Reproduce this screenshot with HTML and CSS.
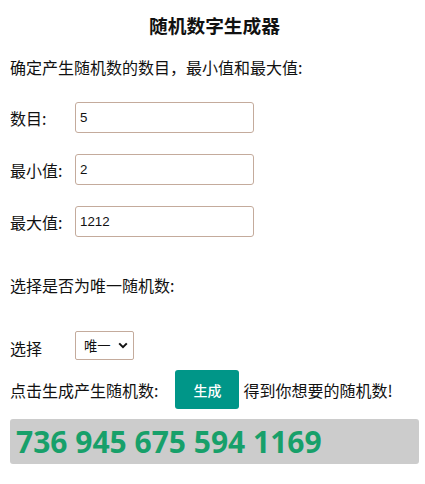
FILE: index.html
```html
<!DOCTYPE html>
<html lang="zh-CN">
<head>
<meta charset="utf-8">
<meta name="viewport" content="width=device-width, initial-scale=1">
<title>随机数字生成器</title>
<link rel="stylesheet" href="styles.css">
</head>
<body>
<div class="wrap">
  <h3 class="rng-title">随机数字生成器</h3>
  <p class="rng-intro">确定产生随机数的数目，最小值和最大值:</p>

  <div class="rng-row">
    <label class="rng-label" for="count">数目:</label>
    <input class="rng-input" id="count" type="text" value="5">
  </div>
  <div class="rng-row">
    <label class="rng-label" for="min">最小值:</label>
    <input class="rng-input" id="min" type="text" value="2">
  </div>
  <div class="rng-row">
    <label class="rng-label" for="max">最大值:</label>
    <input class="rng-input" id="max" type="text" value="1212">
  </div>

  <p class="rng-note">选择是否为唯一随机数:</p>

  <div class="rng-row rng-row--select">
    <label class="rng-label rng-label--low" for="uniq">选择</label>
    <div class="rng-select">
      <span>唯一</span>
      <svg class="rng-chev" viewBox="0 0 10 7" width="10" height="7"><path d="M1.2 1.4 L5 5.2 L8.8 1.4" fill="none" stroke="#111" stroke-width="2"/></svg>
    </div>
  </div>

  <div class="rng-action">
    <span class="rng-lead">点击生成产生随机数:</span>
    <button class="rng-btn" type="button">生成</button>
    <span class="rng-tail">得到你想要的随机数!</span>
  </div>

  <div class="rng-result">736 945 675 594 1169</div>
</div>
</body>
</html>
```

FILE: styles.css
```css
:root{
  --ink:#111; --teal:#009688; --green:#17a06a;
  --field-line:#c4ab9c; --result-bg:#cccccc;
}
*{box-sizing:border-box;}
html,body{margin:0;padding:0;}
body{
  font-family:"Noto Sans CJK SC","Noto Sans",sans-serif;
  font-size:16px;
  color:var(--ink);
  background:#fff;
}
.wrap{ padding:0 6px 0 10px; }

.rng-title{ font-size:18.72px; font-weight:700; text-align:center; margin:0; padding-top:13px; line-height:24px; }
.rng-intro{ margin:18px 0 0; line-height:24px; }

.rng-row{ display:flex; align-items:center; height:31px; margin-top:21px; }
.rng-intro + .rng-row{ margin-top:23px; }
.rng-label{ width:65px; flex-shrink:0; line-height:24px; }
.rng-label--low{ margin-top:5px; }
.rng-input{
  width:179px; height:31px; padding:0 4px;
  border:1px solid var(--field-line); border-radius:3px;
  font-family:"Liberation Sans",Arial,sans-serif; font-size:13.33px; color:var(--ink);
  background:#fff; outline:none;
}

.rng-note{ margin:36px 0 0; line-height:24px; }

.rng-row--select{ margin-top:34px; height:29px; }
.rng-select{
  display:flex; align-items:center; justify-content:space-between;
  width:59px; height:29px; padding:0 5px 0 8px;
  border:1px solid var(--field-line); border-radius:2px;
  font-size:13.33px; background:#fff;
}
.rng-chev{ display:block; }

.rng-action{ display:flex; align-items:center; margin-top:10px; height:39px; }
.rng-lead{ line-height:24px; }
.rng-btn{
  width:64px; height:39px; margin:0 4px 0 17px;
  border:0; border-radius:3px; background:var(--teal); color:#fff;
  font-family:"Noto Sans CJK SC",sans-serif; font-size:14px; font-weight:500; cursor:pointer;
}
.rng-tail{ line-height:24px; }

.rng-result{
  margin-top:10px; height:45px; padding:0 6px;
  background:var(--result-bg); border-radius:3px;
  font-family:"Open Sans",sans-serif; font-weight:700; font-size:30px; line-height:45px;
  color:var(--green);
}
```
